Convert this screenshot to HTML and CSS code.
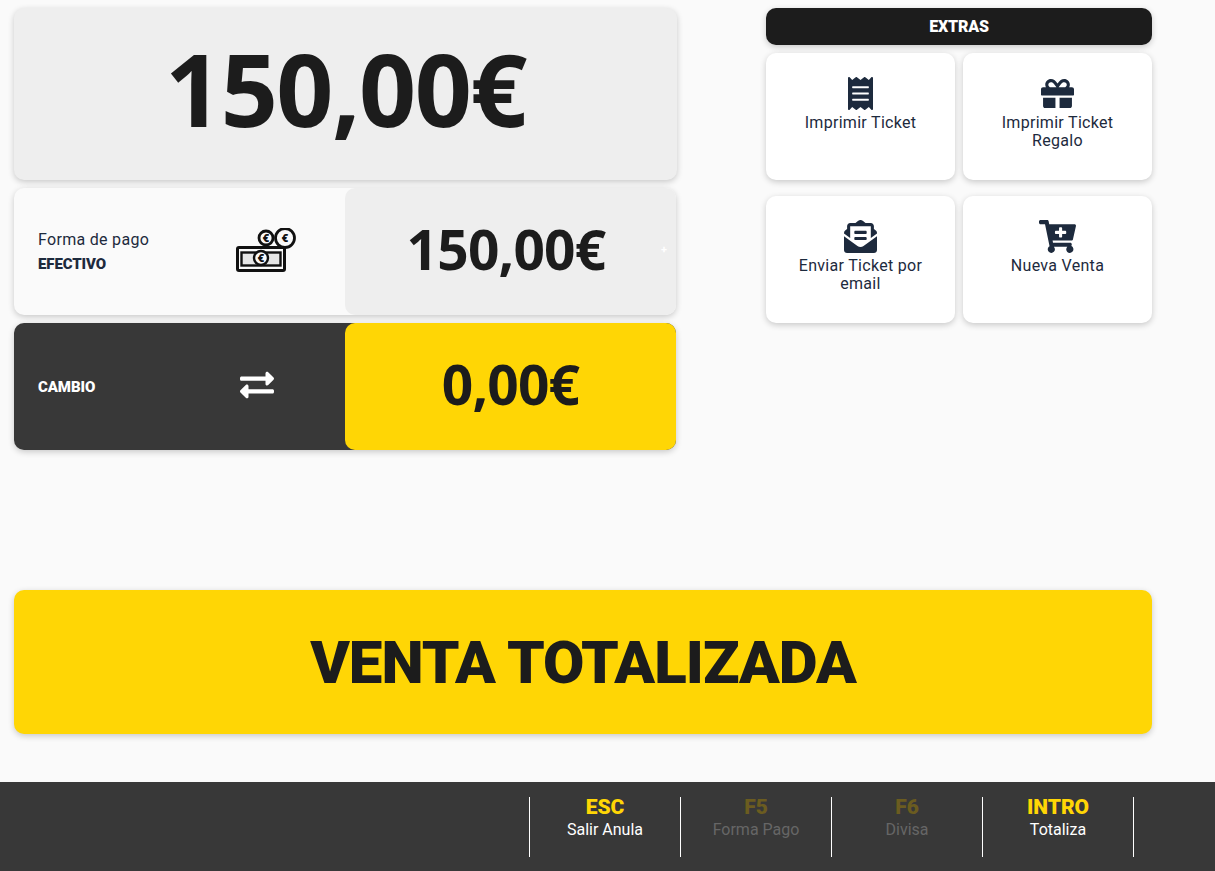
FILE: index.html
```html
<!doctype html>
<html lang="es">
<head>
	<meta charset="UTF-8">
	<title>Venta totalizada</title>
	<link rel="stylesheet" href="styles.css">
</head>
<body>
	<div class="top">
		<div class="left">
			<div class="total card">150,00€</div>

			<div class="row card">
				<div class="row-label">
					<div class="label-text">
						<div>Forma de pago</div>
						<b>EFECTIVO</b>
					</div>
					<svg class="money-icon" viewBox="0 0 62 46">
						<rect x="2.5" y="19.5" width="47" height="23" rx="1.5" fill="none" stroke="#111" stroke-width="3"/>
						<rect x="6.5" y="24.5" width="39" height="13" fill="#e6e6e6" stroke="#111" stroke-width="2.4"/>
						<circle cx="26" cy="30" r="7" fill="#fafafa" stroke="#111" stroke-width="2.4"/>
						<text class="money-eur" x="26" y="34">€</text>
						<circle cx="31" cy="10" r="7" fill="#fafafa" stroke="#111" stroke-width="2.8"/>
						<text class="money-eur" x="31" y="14">€</text>
						<circle cx="50" cy="10" r="9.5" fill="#fafafa" stroke="#111" stroke-width="2.8"/>
						<text class="money-eur" x="50" y="14">€</text>
					</svg>
				</div>
				<div class="row-amount grey">150,00€</div>
				<span class="plus">+</span>
			</div>

			<div class="row card dark">
				<div class="row-label">
					<div class="label-text"><b>CAMBIO</b></div>
					<svg class="change-icon" viewBox="0 0 512 512"><path d="M0 168v-16c0-13.255 10.745-24 24-24h360V80c0-21.367 25.899-32.042 40.971-16.971l80 80c9.372 9.373 9.372 24.569 0 33.941l-80 80C409.956 271.982 384 261.456 384 240v-48H24c-13.255 0-24-10.745-24-24zm488 152H128v-48c0-21.314-25.862-32.08-40.971-16.971l-80 80c-9.372 9.373-9.372 24.569 0 33.941l80 80C102.057 464.997 128 454.437 128 432v-48h360c13.255 0 24-10.745 24-24v-16c0-13.255-10.745-24-24-24z"/></svg>
				</div>
				<div class="row-amount yellow">0,00€</div>
			</div>
		</div>

		<div class="right">
			<div class="extras-title">EXTRAS</div>
			<div class="extras">
				<div class="extra card">
					<svg class="receipt" viewBox="0 0 384 512" preserveAspectRatio="none"><path d="M358.4 3.2L320 48 265.6 3.2a15.9 15.9 0 0 0-19.2 0L192 48 137.6 3.2a15.9 15.9 0 0 0-19.2 0L64 48 25.6 3.2C15-4.7 0 2.8 0 16v480c0 13.2 15 20.7 25.6 12.8L64 464l54.4 44.8a15.9 15.9 0 0 0 19.2 0L192 464l54.4 44.8a15.9 15.9 0 0 0 19.2 0L320 464l38.4 44.8c10.5 7.9 25.6.4 25.6-12.8V16c0-13.2-15-20.7-25.6-12.8zM320 360c0 4.4-3.6 8-8 8H72c-4.4 0-8-3.6-8-8v-16c0-4.4 3.6-8 8-8h240c4.4 0 8 3.6 8 8v16zm0-96c0 4.4-3.6 8-8 8H72c-4.4 0-8-3.6-8-8v-16c0-4.4 3.6-8 8-8h240c4.4 0 8 3.6 8 8v16zm0-96c0 4.4-3.6 8-8 8H72c-4.4 0-8-3.6-8-8v-16c0-4.4 3.6-8 8-8h240c4.4 0 8 3.6 8 8v16z"/></svg>
					<span>Imprimir Ticket</span>
				</div>
				<div class="extra card">
					<svg viewBox="0 0 512 512"><path d="M32 448c0 17.7 14.3 32 32 32h160V320H32v128zm256 32h160c17.7 0 32-14.3 32-32V320H288v160zm192-320h-42.1c6.2-12.1 10.1-25.5 10.1-40 0-48.5-39.5-88-88-88-41.6 0-68.5 21.3-103 68.3-34.5-47-61.4-68.3-103-68.3-48.5 0-88 39.5-88 88 0 14.5 3.8 27.9 10.1 40H32c-17.7 0-32 14.3-32 32v80c0 8.8 7.2 16 16 16h480c8.8 0 16-7.2 16-16v-80c0-17.7-14.3-32-32-32zm-326.1 0c-22.1 0-40-17.9-40-40s17.9-40 40-40c19.9 0 34.6 3.3 86.1 80h-86.1zm206.1 0h-86.1c51.4-76.5 65.7-80 86.1-80 22.1 0 40 17.9 40 40s-17.9 40-40 40z"/></svg>
					<span>Imprimir Ticket Regalo</span>
				</div>
				<div class="extra card">
					<svg viewBox="0 0 512 512"><path d="M176 216h160c8.84 0 16-7.16 16-16v-16c0-8.84-7.16-16-16-16H176c-8.84 0-16 7.16-16 16v16c0 8.84 7.16 16 16 16zm-16 80c0 8.84 7.16 16 16 16h160c8.84 0 16-7.16 16-16v-16c0-8.84-7.16-16-16-16H176c-8.84 0-16 7.16-16 16v16zm96 121.13c-16.42 0-32.84-5.06-46.86-15.19L0 250.86V464c0 26.51 21.49 48 48 48h416c26.51 0 48-21.49 48-48V250.86L302.86 401.94c-14.02 10.12-30.44 15.19-46.86 15.19zm237.61-254.18c-8.85-6.94-17.24-13.47-29.61-22.81V96c0-26.51-21.49-48-48-48h-77.55c-3.04-2.2-5.87-4.26-9.04-6.56C312.6 29.17 279.2-.35 256 0c-23.2-.35-56.59 29.17-73.41 41.44-3.17 2.3-6 4.36-9.04 6.56H96c-26.51 0-48 21.49-48 48v44.14c-12.37 9.33-20.76 15.87-29.61 22.81A47.995 47.995 0 0 0 0 200.72v10.65l96 69.35V96h320v184.72l96-69.35v-10.65c0-14.74-6.78-28.67-18.39-37.77z"/></svg>
					<span>Enviar Ticket por email</span>
				</div>
				<div class="extra card">
					<svg class="cart" viewBox="0 0 576 512"><path d="M504.717 320H211.572l6.545 32h268.418c15.401 0 26.816 14.301 23.403 29.319l-5.517 24.276C523.112 414.668 536 433.828 536 456c0 31.202-25.519 56.444-56.824 55.994-29.823-.429-54.35-24.631-55.155-54.447-.44-16.287 6.085-31.049 16.803-41.548H231.176C241.553 426.165 248 440.326 248 456c0 31.813-26.528 57.431-58.67 55.938-28.54-1.325-51.751-24.385-53.251-52.917-1.158-22.034 10.436-41.455 28.051-51.586L93.883 64H24C10.745 64 0 53.255 0 40V24C0 10.745 10.745 0 24 0h102.529c11.401 0 21.228 8.021 23.513 19.19L159.208 64H551.99c15.401 0 26.816 14.301 23.403 29.319l-47.273 208C525.637 312.246 515.923 320 504.717 320zM408 168h-48v-40c0-8.837-7.163-16-16-16h-16c-8.837 0-16 7.163-16 16v40h-48c-8.837 0-16 7.163-16 16v16c0 8.837 7.163 16 16 16h48v40c0 8.837 7.163 16 16 16h16c8.837 0 16-7.163 16-16v-40h48c8.837 0 16-7.163 16-16v-16c0-8.837-7.163-16-16-16z"/></svg>
					<span>Nueva Venta</span>
				</div>
			</div>
		</div>
	</div>

	<div class="status card">VENTA TOTALIZADA</div>

	<div class="footer">
		<div class="key"><b>ESC</b><span>Salir Anula</span></div>
		<div class="key off"><b>F5</b><span>Forma Pago</span></div>
		<div class="key off"><b>F6</b><span>Divisa</span></div>
		<div class="key"><b>INTRO</b><span>Totaliza</span></div>
	</div>
</body>
</html>
```

FILE: styles.css
```css
*{
	padding: 0;
	margin: 0;
	box-sizing: border-box;
	font-family: Roboto, 'Noto Sans', sans-serif;
}
body{
	background-color: #fafafa;
	color: #1d2a3d;
	height: 871px;
	overflow: hidden;
	padding-top: 8px;
}
.card{
	border-radius: 10px;
	box-shadow: 0 2px 6px rgba(0,0,0,0.2);
}
/* top area */
.top{
	display: flex;
	gap: 89px;
	height: 442px;
	padding-left: 14px;
}
.left{
	width: 663px;
	display: flex;
	flex-direction: column;
	gap: 8px;
}
.total{
	height: 172px;
	background-color: #eeeeee;
	color: #1c1c1c;
	font-family: 'Open Sans', sans-serif;
	font-weight: 700;
	font-size: 100px;
	letter-spacing: -1.5px;
	padding-bottom: 12px;
	display: flex;
	align-items: center;
	justify-content: center;
}
.row{
	height: 127px;
	width: 662px;
	background-color: #fafafa;
	display: flex;
	position: relative;
}
.row.dark{
	background-color: #383838;
	color: #fff;
}
.row-label{
	width: 331px;
	padding-left: 24px;
	display: flex;
	align-items: center;
}
.label-text{
	width: 198px;
	font-size: 16px;
	line-height: 24px;
	letter-spacing: 0.3px;
}
.label-text b{
	font-size: 15px;
	font-weight: 900;
	letter-spacing: -0.1px;
}
.money-icon{
	width: 62px;
	height: 46px;
	margin-top: -2px;
	margin-left: -1px;
}
.money-eur{
	font-family: 'Open Sans', sans-serif;
	font-weight: 800;
	font-size: 11px;
	text-anchor: middle;
	fill: #111;
}
.change-icon{
	width: 34px;
	height: 34px;
	fill: #fff;
	margin-left: 4px;
	margin-top: -4px;
}
.row-amount{
	flex: 1;
	border-radius: 10px;
	color: #1c1c1c;
	font-family: 'Open Sans', sans-serif;
	font-weight: 700;
	font-size: 55px;
	letter-spacing: -0.8px;
	padding-bottom: 6px;
	display: flex;
	align-items: center;
	justify-content: center;
}
.grey{
	background-color: #eeeeee;
	padding-right: 9px;
}
.yellow{
	background-color: #ffd605;
}
.plus{
	position: absolute;
	right: 9px;
	top: 55px;
	color: #fff;
	font-size: 11px;
	font-weight: 700;
}
/* extras */
.right{
	width: 386px;
}
.extras-title{
	height: 37px;
	border-radius: 10px;
	background-color: #1c1c1c;
	color: #fff;
	font-weight: 900;
	font-size: 16px;
	letter-spacing: -0.2px;
	box-shadow: 0 2px 6px rgba(0,0,0,0.2);
	display: flex;
	align-items: center;
	justify-content: center;
	margin-bottom: 8px;
}
.extras{
	display: grid;
	grid-template-columns: 189px 189px;
	grid-auto-rows: 127px;
	column-gap: 8px;
	row-gap: 16px;
}
.extra{
	background-color: #fff;
	padding: 24px 20px 0;
	font-size: 16px;
	line-height: 18px;
	letter-spacing: 0.3px;
	text-align: center;
	display: flex;
	flex-direction: column;
	align-items: center;
}
.extra svg{
	width: 33px;
	height: 33px;
	fill: #1d2a3d;
	margin-bottom: 4px;
}
.extra svg.receipt{
	width: 25px;
}
.extra svg.cart{
	width: 37px;
}
/* main message */
.status{
	margin: 140px 63px 0 14px;
	height: 144px;
	background-color: #ffd605;
	color: #1c1c1c;
	font-weight: 900;
	font-size: 60px;
	letter-spacing: -1px;
	display: flex;
	align-items: center;
	justify-content: center;
}
/* footer keys */
.footer{
	margin-top: 48px;
	height: 89px;
	background-color: #383838;
	display: flex;
	justify-content: flex-end;
	padding: 15px 81px 0 0;
}
.key{
	width: 151px;
	height: 60px;
	border-left: 1px solid #fff;
	display: flex;
	flex-direction: column;
	align-items: center;
	color: #fff;
	font-size: 16px;
	line-height: 22px;
}
.key:last-child{
	width: 152px;
	border-right: 1px solid #fff;
}
.key b{
	color: #ffd605;
	font-size: 21px;
	font-weight: 900;
	line-height: 20px;
	padding-bottom: 2px;
}
.key.off b{
	color: #6b5c20;
}
.key.off span{
	color: #666666;
}
```
